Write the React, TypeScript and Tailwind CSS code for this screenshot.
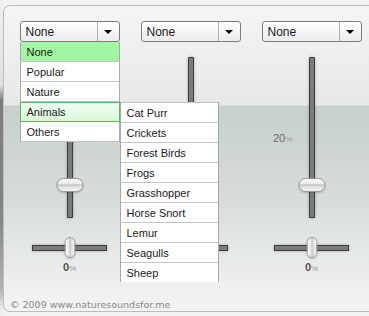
import React from 'react'

const categories = ['None', 'Popular', 'Nature', 'Animals', 'Others']
const animals = ['Cat Purr', 'Crickets', 'Forest Birds', 'Frogs', 'Grasshopper', 'Horse Snort', 'Lemur', 'Seagulls', 'Sheep']

function Arrow() {
  return <div className="w-0 h-0 border-l-[4px] border-r-[4px] border-t-[4px] border-l-transparent border-r-transparent border-t-black" />
}

function Select({ open }: { open?: boolean }) {
  return (
    <div className="relative w-[100px] h-[21px]">
      <div className="flex h-full rounded-[3px] border border-[#7d7d7d] bg-[linear-gradient(180deg,#ffffff,#ececec)]">
        <div className="flex-1 pl-[5px] text-[12px] leading-[20px] text-[#1a1a1a]">None</div>
        <div className="w-[22px] flex items-center justify-center border-l border-[#b0b0b0]">
          <Arrow />
        </div>
      </div>

      {open && (
        <div className="absolute left-0 top-[21px] z-20 w-[100px]">
          {categories.map((c, i) => (
            <div
              key={c}
              className={
                i === 0
                  ? 'h-[20px] pl-[6px] text-[11px] leading-[20px] text-[#1a1a1a] bg-[#a2f5a2] border-x border-[#a8a8a8] border-b border-b-[#c4c4c4]'
                  : i === 3
                  ? 'h-[20px] pl-[6px] text-[11px] leading-[19px] text-[#1a1a1a] bg-[linear-gradient(180deg,#f2fff2,#d9f8d9)] border border-[#4fbf4f]'
                  : 'h-[20px] pl-[6px] text-[11px] leading-[20px] text-[#1a1a1a] bg-white border-x border-[#a8a8a8] border-b border-b-[#c4c4c4]'
              }
            >
              {c}
            </div>
          ))}

          {/* Animals submenu */}
          <div className="absolute left-[100px] top-[60px] w-[99px] border-x border-[#a8a8a8]">
            {animals.map((a) => (
              <div
                key={a}
                className="h-[20px] pl-[6px] text-[11px] leading-[20px] text-[#1a1a1a] bg-white border-t border-[#c4c4c4]"
              >
                {a}
              </div>
            ))}
          </div>
        </div>
      )}
    </div>
  )
}

function Column({ open, level }: { open?: boolean; level?: string }) {
  return (
    <div className="w-[121px] flex flex-col items-center">
      <Select open={open} />

      {/* vertical volume slider */}
      <div className="relative mt-[15px] h-[161px] w-full flex justify-center">
        <div className="w-[6px] h-full rounded-t-[1px] border border-[#3d3d3d] bg-[#7b7b7b] shadow-[0_0_3px_rgba(0,0,0,0.3)]" />
        <div className="absolute top-[121px] left-1/2 -translate-x-1/2 w-[27px] h-[14px] rounded-full border border-[#9c9c9c] bg-[linear-gradient(180deg,#fdfdfd_0%,#e6e6e6_42%,#b9b9b9_50%,#dcdcdc_60%,#f5f5f5_100%)] shadow-[0_1px_2px_rgba(0,0,0,0.2)]" />
        {level && (
          <div className="absolute left-[22px] top-[75px] text-[11px] leading-[12px] text-[#6a6a6a]">
            {level}
            <span className="text-[8px] text-[#9a9a9a]">%</span>
          </div>
        )}
      </div>

      {/* horizontal pan slider */}
      <div className="relative mt-[19px] h-[21px] w-full flex items-center justify-center">
        <div className="w-[75px] h-[6px] border border-[#3d3d3d] bg-[#7b7b7b] shadow-[0_0_3px_rgba(0,0,0,0.3)]" />
        <div className="absolute top-0 left-1/2 -translate-x-1/2 w-[11px] h-[21px] rounded-full border border-[#9c9c9c] bg-[linear-gradient(90deg,#fdfdfd_0%,#e6e6e6_40%,#b9b9b9_50%,#dcdcdc_60%,#f5f5f5_100%)] shadow-[0_1px_2px_rgba(0,0,0,0.2)]" />
      </div>

      <div className="mt-[3px] h-[12px] text-[11px] leading-[12px] font-bold text-[#555]">
        0<span className="text-[8px] font-normal text-[#999]">%</span>
      </div>
    </div>
  )
}

export default function App() {
  return (
    <div className="w-[369px] h-[316px] flex overflow-hidden bg-[#f3f3f3] font-['Liberation_Sans',Arial,sans-serif]">
      <div className="w-[3px] shrink-0 bg-[linear-gradient(180deg,#efefef_0px,#e0e0e0_85px,#7c7c7c_100px,#868686_220px,#b4b4b4_290px,#efefef_310px)]" />
      <div className="relative mt-[5px] h-[307px] flex-1 -mr-4 flex flex-col rounded-l-[7px] border border-r-0 border-[#bdbdbd] pl-[5px] pt-[15px] bg-[linear-gradient(180deg,#f4f5f4_0px,#e6e9e7_99px,#c7d0cb_100px,#d6dcd9_190px,#eef0ef_280px,#f3f3f3_100%)]">
        <div className="flex">
          <Column open />
          <Column />
          <Column level="20" />
        </div>
        <div className="mt-auto pl-[1px] text-[9.5px] leading-[12px] text-[#8a8a8a] font-['DejaVu_Sans',Verdana,sans-serif]">
          © 2009 www.naturesoundsfor.me
        </div>
      </div>
    </div>
  )
}
